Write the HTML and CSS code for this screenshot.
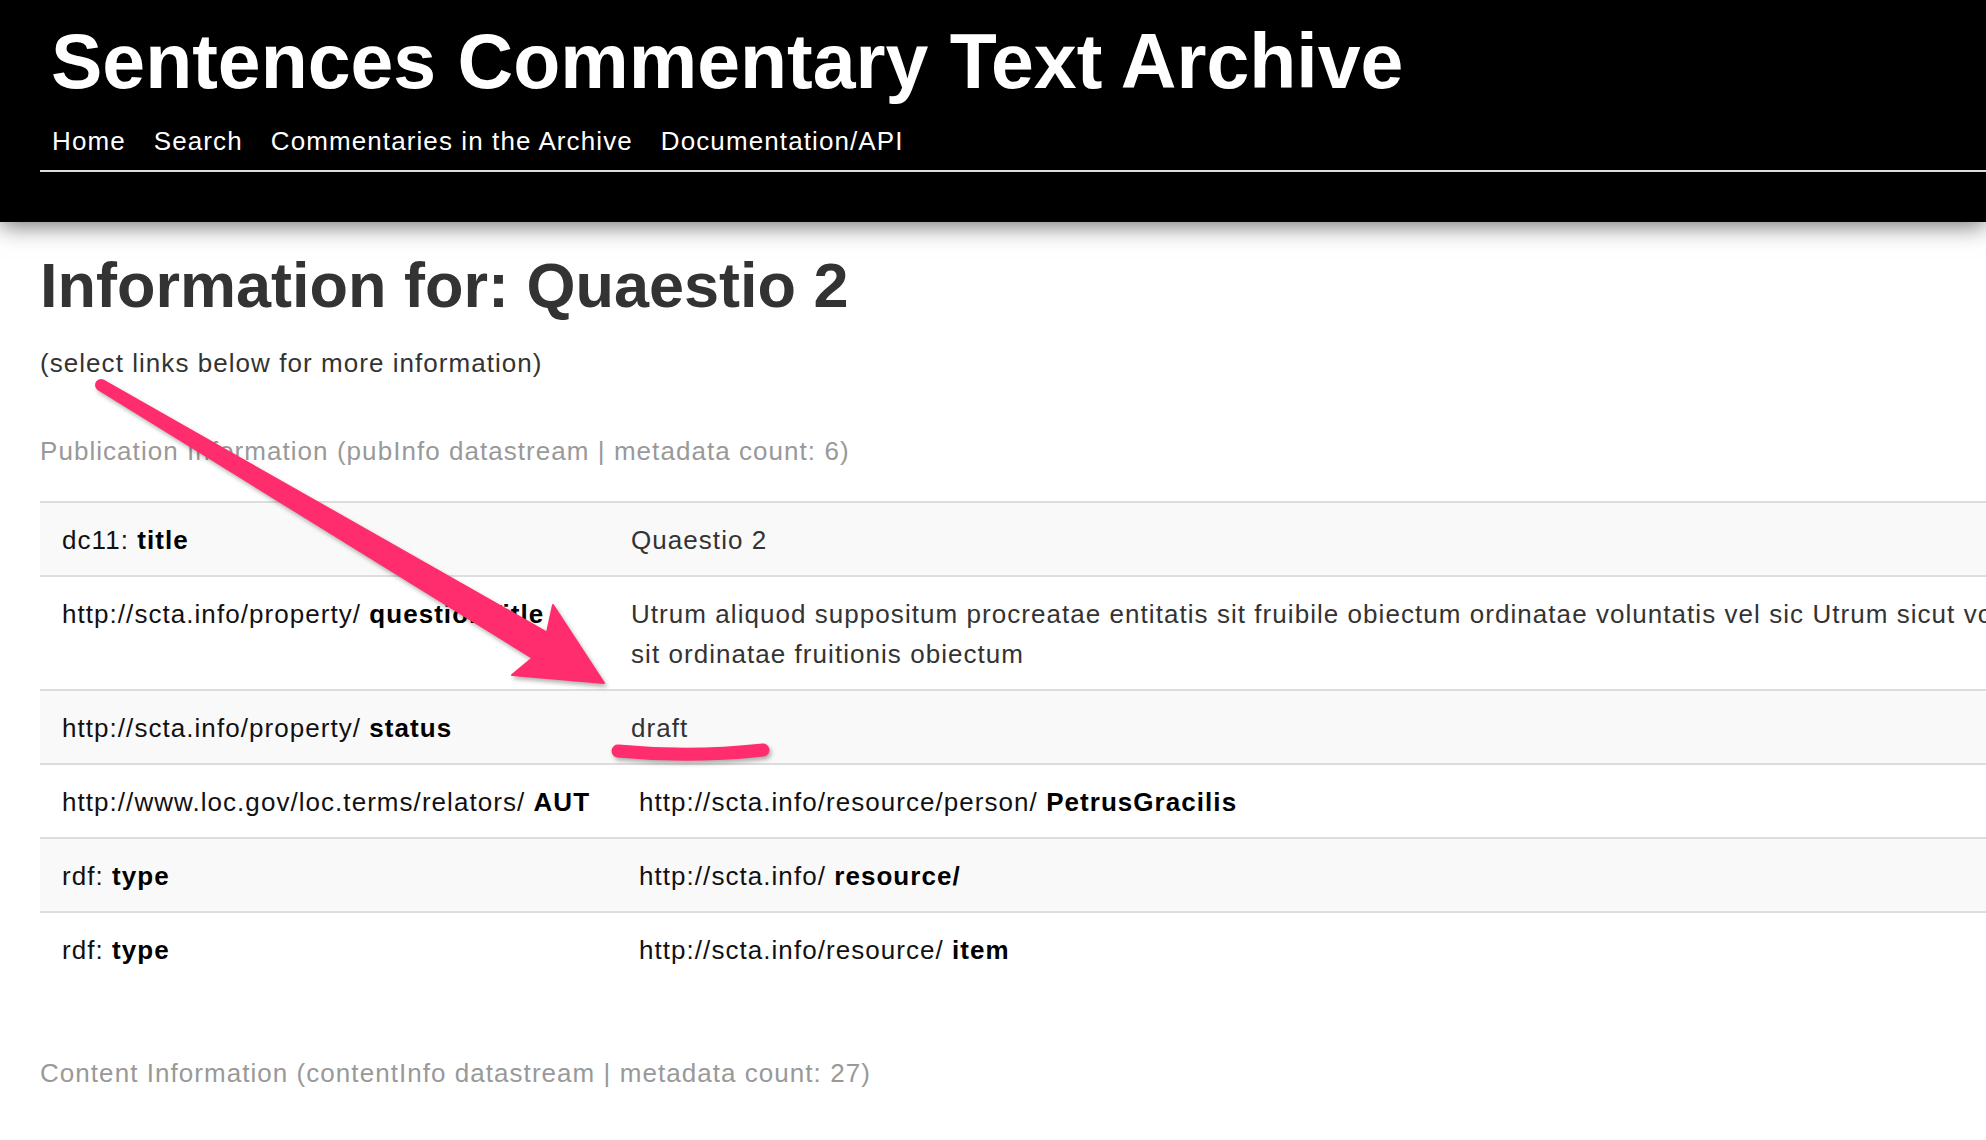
FILE: index.html
```html
<!DOCTYPE html>
<html lang="en">
<head>
<meta charset="utf-8">
<title>Sentences Commentary Text Archive</title>
<link rel="stylesheet" href="styles.css">
</head>
<body>
<header class="site-header">
  <h1 class="site-title"><a href="#">Sentences Commentary Text Archive</a></h1>
  <nav class="site-nav">
    <a href="#">Home</a>
    <a href="#">Search</a>
    <a href="#">Commentaries in the Archive</a>
    <a href="#">Documentation/API</a>
  </nav>
</header>

<main class="content">
  <h2 class="page-title">Information for: Quaestio 2</h2>
  <p class="hint">(select links below for more information)</p>

  <p class="section-label">Publication Information (pubInfo datastream | metadata count: 6)</p>
  <table class="meta-table">
    <tbody>
      <tr>
        <td class="prop">dc11: <b>title</b></td>
        <td class="val">Quaestio 2</td>
      </tr>
      <tr>
        <td class="prop">http://scta.info/property/ <b>questionTitle</b></td>
        <td class="val">Utrum aliquod suppositum procreatae entitatis sit fruibile obiectum ordinatae voluntatis vel sic Utrum sicut voluntas<br>sit ordinatae fruitionis obiectum</td>
      </tr>
      <tr>
        <td class="prop">http://scta.info/property/ <b>status</b></td>
        <td class="val">draft</td>
      </tr>
      <tr>
        <td class="prop">http://www.loc.gov/loc.terms/relators/ <b>AUT</b></td>
        <td class="val"><a class="ref" href="#">http://scta.info/resource/person/ <b>PetrusGracilis</b></a></td>
      </tr>
      <tr>
        <td class="prop">rdf: <b>type</b></td>
        <td class="val"><a class="ref" href="#">http://scta.info/ <b>resource/</b></a></td>
      </tr>
      <tr>
        <td class="prop">rdf: <b>type</b></td>
        <td class="val"><a class="ref" href="#">http://scta.info/resource/ <b>item</b></a></td>
      </tr>
    </tbody>
  </table>

  <p class="section-label section-next">Content Information (contentInfo datastream | metadata count: 27)</p>
</main>

<svg class="annotation" width="1986" height="1140" viewBox="0 0 1986 1140" aria-hidden="true">
  <g class="ink">
    <circle cx="101" cy="385" r="5"/>
    <polygon points="103.5,380.7 547,632.5 553,605 604,683 512,675 532.5,658 98.5,389.3"/>
    <path class="stroke" d="M618 751 Q690 758 763 750"/>
  </g>
</svg>
</body>
</html>
```

FILE: styles.css
```css
html, body {
  margin: 0;
  padding: 0;
  background: #fff;
  overflow-x: hidden;
}

body {
  font-family: "Liberation Sans", Arial, Helvetica, sans-serif;
  font-size: 26px;
  letter-spacing: 1.05px;
  color: #333;
  position: relative;
  min-height: 1140px;
}

.site-header {
  background: #000;
  height: 222px;
  box-sizing: border-box;
  padding-top: 22px;
  box-shadow: 0 4px 22px rgba(0, 0, 0, 0.55);
  position: relative;
  z-index: 1;
  overflow: hidden;
}

.site-title {
  margin: 0 0 0 51px;
  font-size: 77px;
  line-height: 78px;
  font-weight: bold;
  letter-spacing: 0;
  white-space: nowrap;
}

.site-title a {
  color: #fff;
  text-decoration: none;
}

.site-nav {
  margin: 29px 0 0 40px;
  padding: 0 0 16px 12px;
  border-bottom: 2px solid #ddd;
  display: flex;
  gap: 28px;
  font-size: 26px;
  line-height: 25px;
  letter-spacing: 1.1px;
}

.site-nav a {
  color: #fff;
  text-decoration: none;
  white-space: nowrap;
}

.content {
  padding: 0 0 0 40px;
}

.page-title {
  margin: 32px 0 0;
  font-size: 63px;
  line-height: 63px;
  font-weight: bold;
  letter-spacing: 0;
  color: #333;
}

.hint {
  margin: 34px 0 0;
  line-height: 24.5px;
  color: #333;
}

.section-label {
  margin: 63px 0 0;
  line-height: 24.5px;
  color: #999;
}

.section-next {
  margin-top: 76px;
}

.meta-table {
  margin-top: 38px;
  border-collapse: collapse;
  table-layout: fixed;
  width: 2500px;
}

.meta-table td {
  border-top: 2px solid #ddd;
  padding: 17px 10px 15px 22px;
  line-height: 40px;
  vertical-align: top;
  white-space: nowrap;
}

.meta-table td.prop {
  width: 537px;
  color: #111;
}

.meta-table td.val {
  color: #333;
}

.meta-table tr:nth-child(odd) td {
  background: #f9f9f9;
}

.meta-table b {
  font-weight: bold;
  color: #000;
}

.ref {
  color: #111;
  text-decoration: none;
  padding-left: 8px;
}

.annotation {
  position: absolute;
  top: 0;
  left: 0;
  pointer-events: none;
  z-index: 5;
}

.ink {
  fill: #ff2d6d;
  stroke: #ff2d6d;
  stroke-width: 2;
  stroke-linejoin: round;
  filter: drop-shadow(2px 3px 2px rgba(0, 0, 0, 0.3));
}

.ink .stroke {
  fill: none;
  stroke-width: 13;
  stroke-linecap: round;
}
```
